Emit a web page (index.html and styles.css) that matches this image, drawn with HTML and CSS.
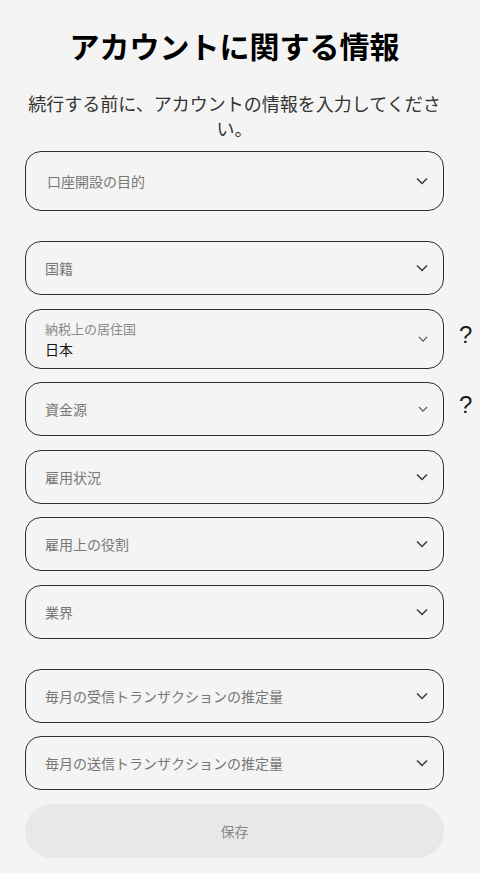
FILE: index.html
```html
<!DOCTYPE html>
<html lang="ja">
<head>
    <meta charset="UTF-8">
    <meta name="viewport" content="width=device-width, initial-scale=1.0">
    <title>アカウントに関する情報</title>
    <link rel="stylesheet" href="styles.css">
</head>
<body>
    <div class="page">
        <h1 class="title">アカウントに関する情報</h1>
        <p class="lead">続行する前に、アカウントの情報を入力してください。</p>

        <div class="form">
            <div class="field field-purpose">
                <span class="label">口座開設の目的</span>
                <svg class="chevron" viewBox="0 0 12 8"><path d="M1 1.5l5 5 5-5"/></svg>
            </div>

            <div class="group">
                <div class="field">
                    <span class="label">国籍</span>
                    <svg class="chevron" viewBox="0 0 12 8"><path d="M1 1.5l5 5 5-5"/></svg>
                </div>

                <div class="row">
                    <div class="field field-filled">
                        <div class="stack">
                            <span class="small-label">納税上の居住国</span>
                            <span class="value">日本</span>
                        </div>
                        <svg class="chevron light" viewBox="0 0 12 8"><path d="M1 1.5l5 5 5-5"/></svg>
                    </div>
                    <span class="help">?</span>
                </div>

                <div class="row">
                    <div class="field">
                        <span class="label">資金源</span>
                        <svg class="chevron light" viewBox="0 0 12 8"><path d="M1 1.5l5 5 5-5"/></svg>
                    </div>
                    <span class="help">?</span>
                </div>

                <div class="field">
                    <span class="label">雇用状況</span>
                    <svg class="chevron" viewBox="0 0 12 8"><path d="M1 1.5l5 5 5-5"/></svg>
                </div>

                <div class="field">
                    <span class="label">雇用上の役割</span>
                    <svg class="chevron" viewBox="0 0 12 8"><path d="M1 1.5l5 5 5-5"/></svg>
                </div>

                <div class="field">
                    <span class="label">業界</span>
                    <svg class="chevron" viewBox="0 0 12 8"><path d="M1 1.5l5 5 5-5"/></svg>
                </div>
            </div>

            <div class="group">
                <div class="field">
                    <span class="label">毎月の受信トランザクションの推定量</span>
                    <svg class="chevron" viewBox="0 0 12 8"><path d="M1 1.5l5 5 5-5"/></svg>
                </div>

                <div class="field">
                    <span class="label">毎月の送信トランザクションの推定量</span>
                    <svg class="chevron" viewBox="0 0 12 8"><path d="M1 1.5l5 5 5-5"/></svg>
                </div>

                <button class="save">保存</button>
            </div>
        </div>
    </div>
</body>
</html>
```

FILE: styles.css
```css
body {
    margin: 0;
    background: #f4f4f4;
    font-family: "Noto Sans CJK JP", "Noto Sans", sans-serif;
    color: #1a1a1a;
}
.page {
    width: 469px;
    padding: 25px 0 16px;
}
.title {
    margin: 0;
    font-size: 30px;
    line-height: 40px;
    font-weight: 700;
    text-align: center;
    color: #000;
}
.lead {
    width: 420px;
    margin: 26px auto 0;
    font-size: 18px;
    line-height: 25px;
    text-align: center;
    color: #333;
}
.form {
    display: flex;
    flex-direction: column;
    gap: 30px;
    padding: 10px 0 0 25px;
}
.group {
    display: flex;
    flex-direction: column;
    gap: 13.5px;
}
.row {
    display: flex;
    align-items: center;
}
.field {
    box-sizing: border-box;
    width: 419px;
    height: 54px;
    flex: none;
    display: flex;
    align-items: center;
    justify-content: space-between;
    padding: 0 15px 0 19px;
    border: 1px solid #2e2e2e;
    border-radius: 16px;
    background: #f4f4f4;
}
.field-purpose {
    height: 60px;
    padding-left: 21px;
}
.field-filled {
    height: 60px;
}
.label {
    font-size: 14px;
    color: #777;
}
.stack {
    display: flex;
    flex-direction: column;
    gap: 1px;
    padding-top: 1px;
}
.small-label {
    font-size: 13px;
    line-height: 19px;
    color: #8a8a8a;
}
.value {
    font-size: 14px;
    line-height: 20px;
    color: #111;
}
.chevron {
    width: 12px;
    height: 8px;
    fill: none;
    stroke: #3a3a3a;
    stroke-width: 1.5;
}
.chevron.light {
    width: 10px;
    stroke: #555;
}
.help {
    margin-left: 15px;
    margin-top: -8px;
    font-family: "Liberation Sans", Arial, sans-serif;
    font-size: 24px;
    color: #1a1a1a;
}
.save {
    width: 419px;
    height: 54px;
    border: none;
    border-radius: 27px;
    background: #e8e8e8;
    font-family: inherit;
    font-size: 14px;
    color: #888;
    cursor: pointer;
}
```
